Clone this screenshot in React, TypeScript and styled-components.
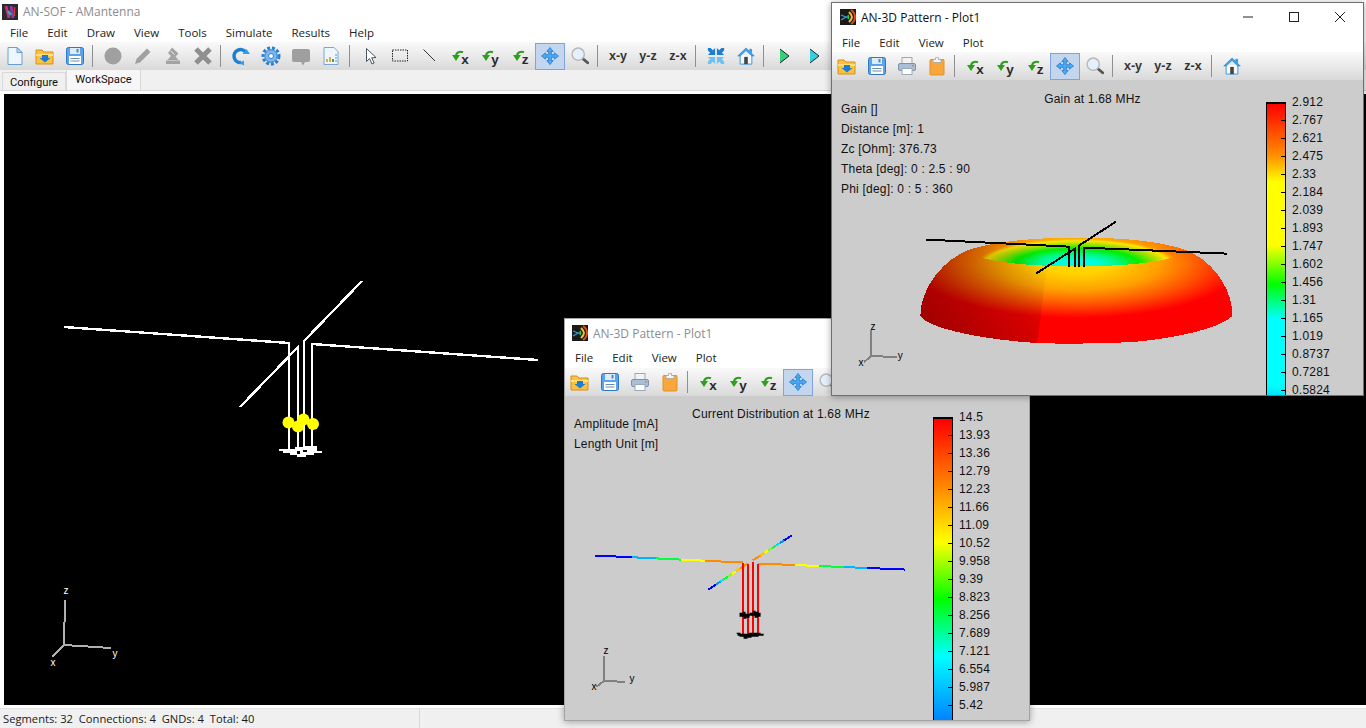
import React from 'react';
import styled, { createGlobalStyle } from 'styled-components';

const UI_FONT = '"Open Sans", "Noto Sans", "Liberation Sans", sans-serif';
const PLOT_FONT = '"Liberation Sans", Arial, sans-serif';

const Global = createGlobalStyle`
  html, body { margin: 0; padding: 0; width: 1366px; height: 728px; overflow: hidden; background: #fff; }
  * { box-sizing: border-box; }
`;

const Desktop = styled.div`
  position: relative;
  width: 1366px;
  height: 728px;
  overflow: hidden;
  font-family: ${UI_FONT};
  font-size: 12px;
  color: #1a1a1a;
`;

const MainWindow = styled.div`
  display: flex;
  flex-direction: column;
  height: 728px;
  background: #fff;
`;

const TitleBar = styled.div<{ $h: number; $pad: number; $active?: boolean }>`
  display: flex;
  align-items: center;
  gap: 5px;
  height: ${p => p.$h}px;
  padding-left: ${p => p.$pad}px;
  background: #fff;
  color: ${p => (p.$active ? '#111' : '#8c8c8c')};
  font-size: 12px;
  flex: none;
`;

const TitleText = styled.span`
  flex: 1;
  white-space: nowrap;
`;

const MenuBar = styled.div<{ $h: number; $top?: number }>`
  display: flex;
  align-items: center;
  height: ${p => p.$h}px;
  padding: ${p => p.$top ?? 0}px 0 0 0.5px;
  background: #fff;
  flex: none;
`;

const MenuItem = styled.span`
  padding: 0 9.5px;
  font-size: 11.5px;
  white-space: nowrap;
  color: #222;
`;

const Toolbar = styled.div`
  display: flex;
  align-items: center;
  height: 28px;
  flex: none;
  background: linear-gradient(#f9f9f9, #f2f2f2 25%, #d9d9d9);
`;

const ToolButton = styled.div<{ $active?: boolean }>`
  display: flex;
  align-items: center;
  justify-content: center;
  flex: none;
  width: 30px;
  height: 27px;
  border: 1px solid ${p => (p.$active ? '#7ea3df' : 'transparent')};
  background: ${p => (p.$active ? '#c4d5ee' : 'transparent')};
`;

const Separator = styled.div<{ $left?: number; $right?: number }>`
  flex: none;
  width: 1px;
  height: 22px;
  background: #8f8f8f;
  margin: 0 ${p => p.$right ?? 5}px 0 ${p => p.$left ?? 2}px;
`;

const AxisLetter = styled.span`
  font: bold 13.5px/1 ${PLOT_FONT};
  color: #2a2a2a;
  margin: 8px 0 0 -3px;
`;

const PlaneLabel = styled.span`
  font: bold 12.5px/1 ${PLOT_FONT};
  color: #333;
  white-space: nowrap;
`;

const TabStrip = styled.div`
  display: flex;
  align-items: flex-end;
  height: 21px;
  padding-left: 2px;
  flex: none;
  background: #f0f0f0;
  border-bottom: 1px solid #d9d9d9;
`;

const Tab = styled.div<{ $active?: boolean }>`
  display: flex;
  align-items: center;
  justify-content: center;
  width: ${p => (p.$active ? 75 : 64)}px;
  height: ${p => (p.$active ? 21 : 18)}px;
  background: ${p => (p.$active ? '#f7f7f7' : '#f0f0f0')};
  border: 1px solid #d9d9d9;
  border-bottom: none;
  padding-top: ${p => (p.$active ? 0 : 1)}px;
  padding-bottom: ${p => (p.$active ? 1 : 0)}px;
  font-family: Roboto, ${UI_FONT};
  font-size: 11.2px;
  color: #111;
`;

const Canvas = styled.div`
  flex: 1;
  margin: 3px 0 3px 4px;
  background: #000;
  min-height: 0;
`;

const Drawing = styled.svg`
  display: block;
  width: 100%;
  height: 100%;
`;

const StatusBar = styled.div`
  display: flex;
  align-items: center;
  height: 20px;
  flex: none;
  background: #f0f0f0;
  border-top: 1px solid #e3e3e3;
`;

const StatusCell = styled.div`
  width: 420px;
  height: 100%;
  display: flex;
  align-items: center;
  padding-left: 3px;
  border-right: 1px solid #d9d9d9;
  font-size: 11.2px;
  white-space: pre;
`;

const PlotWindow = styled.div<{ $x: number; $y: number; $w: number; $h: number; $active?: boolean }>`
  position: absolute;
  left: ${p => p.$x}px;
  top: ${p => p.$y}px;
  width: ${p => p.$w}px;
  height: ${p => p.$h}px;
  display: flex;
  flex-direction: column;
  background: #fff;
  border: 1px solid ${p => (p.$active ? '#6f6f6f' : '#a3a3a3')};
  box-shadow: 0 1px 7px rgba(0, 0, 0, 0.35);
  overflow: hidden;
`;

const WindowControls = styled.div`
  display: flex;
  flex: none;
  width: 138px;
  height: 100%;
`;

const WindowControl = styled.div`
  display: flex;
  align-items: center;
  justify-content: center;
  flex: 1;
`;

const PlotBody = styled.div<{ $padTop: number; $padLeft: number }>`
  position: relative;
  display: flex;
  align-items: flex-start;
  flex: 1;
  min-height: 0;
  overflow: hidden;
  padding: ${p => p.$padTop}px 0 0 ${p => p.$padLeft}px;
  background: #ccc;
  color: #111;
  font: 12px ${PLOT_FONT};
  letter-spacing: 0.2px;
`;

const PlotLayer = styled.svg`
  position: absolute;
  inset: 0;
  width: 100%;
  height: 100%;
`;

const InfoList = styled.div<{ $top: number }>`
  position: relative;
  flex: none;
  width: 100px;
  margin-top: ${p => p.$top}px;
`;

const InfoLine = styled.div`
  height: 20px;
  line-height: 20px;
  white-space: nowrap;
`;

const PlotTitle = styled.div<{ $top: number; $gap: number; $w: number }>`
  position: relative;
  flex: none;
  width: ${p => p.$w}px;
  text-align: center;
  line-height: 14px;
  margin: ${p => p.$top}px ${p => p.$gap}px 0 0;
  white-space: nowrap;
`;

const ScaleBar = styled.div<{ $stops: string; $h: number }>`
  position: relative;
  flex: none;
  width: 20px;
  height: ${p => p.$h}px;
  border: 2px solid #000;
  border-width: 2px 1.5px 0;
  background: linear-gradient(${p => p.$stops});

  &::after {
    content: '';
    position: absolute;
    right: 0;
    top: 16px;
    width: 4px;
    height: 100%;
    background: repeating-linear-gradient(#000 0 1px, transparent 1px 18px);
  }
`;

const ScaleLabels = styled.div`
  position: relative;
  flex: none;
  margin: -9px 0 0 6px;
`;

const ScaleLabel = styled.div`
  height: 18px;
  line-height: 18px;
  white-space: nowrap;
`;

const AppIcon = styled.svg`
  flex: none;
`;

/* ---------- icons ---------- */

const Ico: React.FC<{ children: React.ReactNode; size?: number }> = ({ children, size = 20 }) => (
  <svg width={size} height={size} viewBox="0 0 20 20">{children}</svg>
);

const NewIcon = () => (
  <Ico>
    <path d="M3 1.500h9l5 5v12H3z" fill="#eef6fd" stroke="#6aa0cf" />
    <path d="M12 1.500v5h5z" fill="#bcd9f0" stroke="#6aa0cf" />
  </Ico>
);
const OpenIcon = () => (
  <Ico>
    <path d="M1 4h6l2 2h9v12H1z" fill="#fcc33a" stroke="#d98d1f" />
    <path d="M1 8h17v2H1z" fill="#ffe07a" />
    <path d="M7 9h6v3h2.500L10 16.500 4.500 12H7z" fill="#1c7cd8" />
  </Ico>
);
const SaveIcon = () => (
  <Ico>
    <rect x="1.500" y="1.500" width="17" height="17" rx="2" fill="#5aa5ea" stroke="#2f78c4" />
    <rect x="5" y="2" width="10" height="6" fill="#dcecfa" />
    <rect x="11.500" y="3" width="2" height="3.500" fill="#4b88c4" />
    <rect x="4" y="10" width="12" height="8" fill="#fff" />
    <path d="M5.500 12.500h9M5.500 15h9" stroke="#6a8cac" />
  </Ico>
);
const PrintIcon = () => (
  <Ico>
    <rect x="5" y="1.500" width="10" height="7" fill="#f3f3f3" stroke="#9aa9bb" />
    <rect x="1.500" y="7.500" width="17" height="7" rx="1.500" fill="#a9bfd8" stroke="#7b93b0" />
    <rect x="5" y="12.500" width="10" height="6" fill="#fff" stroke="#9aa9bb" />
    <rect x="15" y="9" width="2" height="1.500" fill="#e0883a" />
  </Ico>
);
const ClipIcon = () => (
  <Ico>
    <rect x="3" y="3.500" width="14" height="15.500" rx="1" fill="#f8a73d" stroke="#e58f22" />
    <path d="M6 3.500h2.500V1.500h3v2H14v3H6z" fill="#f5f5f5" stroke="#a5a5a5" strokeWidth="0.800" />
  </Ico>
);
const CircleIcon = () => <Ico><circle cx="10" cy="10" r="8.500" fill="#a0a0a0" /></Ico>;
const PencilIcon = () => (
  <Ico><path d="M2 18l1.500-5L14 2.500l3.500 3.500L7 16.500z" fill="#a0a0a0" /></Ico>
);
const StampIcon = () => (
  <Ico>
    <path d="M9 1.500l6.500 6-3 3 3 3.500H4.500l3.500-4-3-3z" fill="#a3a3a3" />
    <path d="M3 14.500h14V18H3z" fill="#a3a3a3" />
    <path d="M7.500 5l4 3.500" stroke="#eee" />
  </Ico>
);
const CrossIcon = () => (
  <Ico><path d="M3 3l14 14M17 3L3 17" stroke="#8f8f8f" strokeWidth="5" /></Ico>
);
const RefreshIcon = () => (
  <Ico>
    <path d="M15 6.500A6.500 6.500 0 1 0 10 16.500" fill="none" stroke="#1b7fd6" strokeWidth="3.500" />
    <path d="M11.500 8h7.500l-3.500-5zM8 17l5 2.500v-5z" fill="#28a1ee" />
  </Ico>
);
const GearIcon = () => (
  <Ico>
    <circle cx="10" cy="10" r="8" fill="none" stroke="#2d7fd0" strokeWidth="3" strokeDasharray="3 1.800" />
    <circle cx="10" cy="10" r="6.200" fill="#7cb8ef" stroke="#2d7fd0" />
    <circle cx="10" cy="10" r="2.500" fill="#fff" stroke="#2d7fd0" />
  </Ico>
);
const CommentIcon = () => (
  <Ico><path d="M3 3h14a2 2 0 0 1 2 2v9a2 2 0 0 1-2 2h-3l-2 3.500L10 16H3a2 2 0 0 1-2-2V5a2 2 0 0 1 2-2z" fill="#9f9f9f" /></Ico>
);
const ReportIcon = () => (
  <Ico>
    <path d="M3 1.500h10l4 4v13H3z" fill="#eef5fc" stroke="#7ba6cf" />
    <path d="M6 16v-3M9 16v-5" stroke="#e8a92f" strokeWidth="2" />
    <path d="M12 16v-3" stroke="#3aa655" strokeWidth="2" />
    <path d="M14 9h2M14 12h2M14 15h2" stroke="#5a94cf" />
  </Ico>
);
const ArrowIcon = () => (
  <Ico><path d="M6.500 2.500v13l3-3 2.500 5.500 2.200-1-2.500-5.200 4.300-.3z" fill="#fff" stroke="#4c5560" /></Ico>
);
const RectIcon = () => (
  <Ico><rect x="2.500" y="4" width="15" height="11" fill="none" stroke="#222" strokeDasharray="1.500 1" /></Ico>
);
const LineIcon = () => (
  <Ico><path d="M3.500 3.500L15 15" stroke="#333" /></Ico>
);
const RotateArrow = () => (
  <svg width="13" height="13" viewBox="0 0 13 13">
    <path d="M12 2.200C8.500 1 5.500 2.500 5 5.500" fill="none" stroke="#2f9e1f" strokeWidth="2.200" />
    <path d="M1 5h8L5 11z" fill="#2f9e1f" />
  </svg>
);
const PanIcon = () => (
  <Ico size={18}>
    <path d="M10 .5L13.500 5H11.500v3.500H15V6.500L19.500 10 15 13.500V11.500H11.500V15H13.500L10 19.500 6.500 15H8.500V11.500H5V13.500L.5 10 5 6.500V8.500H8.500V5H6.500z" fill="#49a9f2" stroke="#1f73c6" strokeWidth="0.800" />
  </Ico>
);
const ZoomIcon = () => (
  <Ico size={18}>
    <path d="M12.500 12.500l6 5" stroke="#555" strokeWidth="3.200" strokeLinecap="round" />
    <circle cx="8" cy="8" r="6.800" fill="#e4f0fb" stroke="#b9b9b9" strokeWidth="1.600" />
  </Ico>
);
const FitIcon = () => (
  <Ico size={18}>
    <path d="M1 1h3l2.500 2.500L9 1v8H1l2.500-2.500L1 4z" fill="#1c7fd2" />
    <path d="M19 1h-3l-2.500 2.500L11 1v8h8l-2.500-2.500L19 4z" fill="#1c7fd2" />
    <path d="M1 19h3l2.500-2.500L9 19v-8H1l2.500 2.500L1 16z" fill="#6cc2f2" />
    <path d="M19 19h-3l-2.500-2.500L11 19v-8h8l-2.500 2.500L19 16z" fill="#6cc2f2" />
  </Ico>
);
const HomeIcon = () => (
  <Ico size={18}>
    <path d="M3.500 9v10h13V9" fill="#f4f9fe" stroke="#2f8fdd" />
    <path d="M10 1L.8 10h2.700L10 4l6.500 6h2.700l-3-3V2.500h-2V5z" fill="#39a3ee" stroke="#1c78c8" strokeWidth="0.600" />
    <rect x="8" y="11" width="4" height="8" fill="#444" />
  </Ico>
);
const PlayIcon: React.FC<{ color: string }> = ({ color }) => (
  <Ico>
    <path d="M6 3l9 7-9 7z" fill={color} />
    <path d="M6 3l9 7-9 7" fill="none" stroke="#222" />
  </Ico>
);

const Rotate: React.FC<{ axis: string }> = ({ axis }) => (
  <ToolButton>
    <RotateArrow />
    <AxisLetter>{axis}</AxisLetter>
  </ToolButton>
);
const Plane: React.FC<{ label: string }> = ({ label }) => (
  <ToolButton><PlaneLabel>{label}</PlaneLabel></ToolButton>
);
const Tool: React.FC<{ children: React.ReactNode; active?: boolean }> = ({ children, active }) => (
  <ToolButton $active={active}>{children}</ToolButton>
);

const PlotAppIcon = () => (
  <AppIcon width="16" height="16" viewBox="0 0 16 16">
    <rect width="16" height="16" fill="#1a1a1a" />
    <path d="M1 6l5 2-5 3M5 8h3" stroke="#3b9ad6" strokeWidth="1.300" fill="none" />
    <path d="M11 1c3 2 4 5 4 7s-1 5-4 7" stroke="#e04a20" strokeWidth="2" fill="none" />
    <path d="M9 3c2 2 3 3 3 5s-1 3-3 5" stroke="#e8c52a" strokeWidth="2" fill="none" />
    <path d="M8 6c.7 1 .7 3 0 4" stroke="#3fc04a" strokeWidth="1.500" fill="none" />
  </AppIcon>
);
const MainAppIcon = () => (
  <AppIcon width="16" height="16" viewBox="0 0 16 16">
    <rect width="16" height="16" fill="#2a2a2a" />
    <path d="M4 2l3 12" stroke="#c2317e" strokeWidth="3" />
    <path d="M9 2l2 12" stroke="#8c35b8" strokeWidth="3" />
    <path d="M6 7l3 4" stroke="#2fb3a8" strokeWidth="2.500" />
    <path d="M12.500 3v9" stroke="#d33a2e" strokeWidth="1.500" />
  </AppIcon>
);

/* ---------- drawings ---------- */

const Axes: React.FC<{
  o: [number, number]; z: [number, number]; y: [number, number]; x: [number, number];
  lz: [number, number]; ly: [number, number]; lx: [number, number];
  stroke: string; text: string; size: number; width: number;
}> = ({ o, z, y, x, lz, ly, lx, stroke, text, size, width }) => (
  <g>
    <path d={`M${o} L${z} M${o} L${y} M${o} L${x}`} stroke={stroke} strokeWidth={width} fill="none" shapeRendering="crispEdges" />
    <g fill={text} fontSize={size} fontFamily={PLOT_FONT} textAnchor="middle">
      <text x={lz[0]} y={lz[1]}>z</text>
      <text x={ly[0]} y={ly[1]}>y</text>
      <text x={lx[0]} y={lx[1]}>x</text>
    </g>
  </g>
);

const MainAntenna = () => (
  <Drawing viewBox="4 94 1362 611" preserveAspectRatio="none">
    <g fill="none" stroke="#fff" strokeWidth="2.400" shapeRendering="crispEdges">
      <path d="M64 327L289 343V449" />
      <path d="M240 407L298 347V449" />
      <path d="M362 281L304 341V449" />
      <path d="M538 360L312 344V449" />
    </g>
    <g fill="#ffff00">
      <circle cx="288.500" cy="422.500" r="6" />
      <circle cx="298" cy="426.500" r="6" />
      <circle cx="303.500" cy="419.500" r="6" />
      <circle cx="313" cy="424" r="6" />
    </g>
    <path d="M279 449h16v-2h10v-1h12v5h5v2h-8v2h-8v2h-9v-2h-7v-2h-7v-2h-4z" fill="#fff" />
    <path d="M297 451h3v3h-3zM303 450h4v2h-4z" fill="#000" />
    <Axes o={[64, 645]} z={[65, 600]} y={[111, 648]} x={[52, 657]} lz={[66, 594]} ly={[115, 657]} lx={[53, 666]}
      stroke="#b0b0b0" text="#fff" size={10} width={2} />
  </Drawing>
);

const DOME = 'M921 315C921 290 940 262 967 250C995 240 1040 237 1077 237C1120 237 1160 240 1187 250C1215 262 1232 290 1232 315C1222 326 1180 337 1133 341C1100 343 1060 343 1037 342C1000 340 930 330 921 315Z';

const GainPlot = () => (
  <PlotLayer viewBox="833 80 529 314" preserveAspectRatio="xMinYMin slice">
    <defs>
      <radialGradient id="domeFill" gradientUnits="userSpaceOnUse" cx="0" cy="0" r="1" gradientTransform="translate(1077 262) scale(165 55)">
        <stop offset="0.2" stopColor="#ffd400" />
        <stop offset="0.5" stopColor="#ffa000" />
        <stop offset="0.75" stopColor="#ff5400" />
        <stop offset="1" stopColor="#ff0000" />
      </radialGradient>
      <radialGradient id="ringFill" gradientUnits="userSpaceOnUse" cx="0" cy="0" r="1" gradientTransform="translate(1077 264) scale(100 26)">
        <stop offset="0.2" stopColor="#00ffe0" />
        <stop offset="0.42" stopColor="#00f880" />
        <stop offset="0.62" stopColor="#00ee00" />
        <stop offset="0.8" stopColor="#a8e000" />
        <stop offset="0.92" stopColor="#ffe600" />
        <stop offset="1" stopColor="#ffd000" stopOpacity="0" />
      </radialGradient>
      <linearGradient id="shade" gradientUnits="userSpaceOnUse" x1="930" y1="320" x2="1040" y2="250">
        <stop offset="0" stopColor="#000" stopOpacity="0.36" />
        <stop offset="0.63" stopColor="#000" stopOpacity="0.16" />
        <stop offset="1" stopColor="#000" stopOpacity="0" />
      </linearGradient>
      <clipPath id="leftPart">
        <path d="M900 230H1047V266L1037 345H900z" />
      </clipPath>
    </defs>
    <g shapeRendering="crispEdges">
      <path d={DOME} fill="url(#domeFill)" />
      <path d="M970 253C1000 232 1154 232 1184 253C1150 270 1004 270 970 253Z" fill="url(#ringFill)" />
      <path d={DOME} fill="url(#shade)" clipPath="url(#leftPart)" />
      <g fill="none" stroke="#000" strokeWidth="2">
        <path d="M927 239L1069 246V266" />
        <path d="M1036 273L1075 248V266" />
        <path d="M1116 221L1079 245V266" />
        <path d="M1227 253L1084 247V266" />
      </g>
    </g>
    <Axes o={[872, 355]} z={[872, 329]} y={[898, 356]} x={[865, 361]} lz={[874, 329]} ly={[901, 358]} lx={[862, 365]}
      stroke="#808080" text="#000" size={10} width={2} />
  </PlotLayer>
);

type Seg = [number, string];
const BLUE = '#0000ff';
const SKY = '#00b4ff';
const GREEN = '#00ff40';
const YEL = '#ffff00';
const ORG = '#ff8c00';

const leftWire: Seg[] = [[628, BLUE], [632, BLUE], [650, SKY], [656, SKY], [671, GREEN], [681, GREEN], [705, YEL], [714, ORG], [742, ORG]];
const rightWire: Seg[] = [[779, ORG], [794, ORG], [818, YEL], [843, GREEN], [866, SKY], [904, BLUE]];
const diagColors = [BLUE, BLUE, '#0090ff', '#00e0e0', GREEN, '#80ff00', YEL, '#ffc000', ORG, ORG];

const horizontal = (x0: number, y0: number, x1: number, y1: number, segs: Seg[]) => {
  let prev = x0;
  return segs.map(([end, color]) => {
    const ya = y0 + ((prev - x0) / (x1 - x0)) * (y1 - y0);
    const yb = y0 + ((end - x0) / (x1 - x0)) * (y1 - y0);
    const line = <line key={end} x1={prev} y1={ya} x2={end} y2={yb} stroke={color} />;
    prev = end;
    return line;
  });
};
const diagonal = (x0: number, y0: number, x1: number, y1: number, colors: string[]) =>
  colors.map((color, i) => {
    const a = i / colors.length;
    const b = (i + 1) / colors.length;
    return (
      <line key={i} x1={x0 + (x1 - x0) * a} y1={y0 + (y1 - y0) * a} x2={x0 + (x1 - x0) * b} y2={y0 + (y1 - y0) * b} stroke={color} />
    );
  });

const CurrentPlot = () => (
  <PlotLayer viewBox="565 396 463 323" preserveAspectRatio="xMinYMin slice">
    <g strokeWidth="2" shapeRendering="crispEdges" fill="none">
      {horizontal(595, 555, 742, 562, leftWire)}
      {horizontal(757, 563, 904, 569, rightWire)}
      {diagonal(708, 589, 747, 563, diagColors)}
      {diagonal(791, 535, 752, 560, diagColors)}
      <path d="M742 562V634M747 563V634M752 561V634M757 563V634" stroke="#ff0000" />
    </g>
    <path d="M739 612h3v-1h3v2h4v-1h3v-2h3v1h3v1h2v4h-3v1h-3v-2h-5v2h-3v1h-3v-2h-4z" fill="#000" />
    <path d="M736 632h4v1h8v-1h12v1h3v2h-5v1h-7v1h-4v1h-4v-2h-4v-1h-2v-2h-1z" fill="#000" />
    <Axes o={[604, 680]} z={[604, 655]} y={[625, 681]} x={[596, 686]} lz={[606, 653]} ly={[632, 681]} lx={[594, 689]}
      stroke="#808080" text="#000" size={10} width={2} />
  </PlotLayer>
);

/* ---------- plot window ---------- */

const currentScale = ['14.5', '13.93', '13.36', '12.79', '12.23', '11.66', '11.09', '10.52', '9.958', '9.39', '8.823', '8.256', '7.689', '7.121', '6.554', '5.987', '5.42'];
const gainScale = ['2.912', '2.767', '2.621', '2.475', '2.33', '2.184', '2.039', '1.893', '1.747', '1.602', '1.456', '1.31', '1.165', '1.019', '0.8737', '0.7281', '0.5824'];

const currentStops = '#ff0000 0, #ff9000 72px, #ffff00 123px, #00ff00 180px, #00ffff 237px, #0080ff 303px';
const gainStops = '#ff0000 0, #ff8c00 51px, #ffff00 78px, #ffff00 141px, #00ff00 180px, #00ffff 215px, #00ffff 281px, #00e0ff 293px';

const PlotToolbar: React.FC<{ home?: boolean }> = ({ home }) => (
  <Toolbar>
    <Tool><OpenIcon /></Tool>
    <Tool><SaveIcon /></Tool>
    <Tool><PrintIcon /></Tool>
    <Tool><ClipIcon /></Tool>
    <Separator />
    <Rotate axis="x" />
    <Rotate axis="y" />
    <Rotate axis="z" />
    <Tool active><PanIcon /></Tool>
    <Tool><ZoomIcon /></Tool>
    <Separator />
    <Plane label="x-y" />
    <Plane label="y-z" />
    <Plane label="z-x" />
    <Separator $left={3} />
    {home && <Tool><HomeIcon /></Tool>}
  </Toolbar>
);

export default function App() {
  return (
    <Desktop>
      <Global />
      <MainWindow>
        <TitleBar $h={23} $pad={2}>
          <MainAppIcon />
          <TitleText>AN-SOF - AMantenna</TitleText>
        </TitleBar>
        <MenuBar $h={19}>
          {['File', 'Edit', 'Draw', 'View', 'Tools', 'Simulate', 'Results', 'Help'].map(m => (
            <MenuItem key={m}>{m}</MenuItem>
          ))}
        </MenuBar>
        <Toolbar>
          <Tool><NewIcon /></Tool>
          <Tool><OpenIcon /></Tool>
          <Tool><SaveIcon /></Tool>
          <Separator />
          <Tool><CircleIcon /></Tool>
          <Tool><PencilIcon /></Tool>
          <Tool><StampIcon /></Tool>
          <Tool><CrossIcon /></Tool>
          <Separator />
          <Tool><RefreshIcon /></Tool>
          <Tool><GearIcon /></Tool>
          <Tool><CommentIcon /></Tool>
          <Tool><ReportIcon /></Tool>
          <Separator $left={3} />
          <Tool><ArrowIcon /></Tool>
          <Tool><RectIcon /></Tool>
          <Tool><LineIcon /></Tool>
          <Rotate axis="x" />
          <Rotate axis="y" />
          <Rotate axis="z" />
          <Tool active><PanIcon /></Tool>
          <Tool><ZoomIcon /></Tool>
          <Separator />
          <Plane label="x-y" />
          <Plane label="y-z" />
          <Plane label="z-x" />
          <Separator />
          <Tool><FitIcon /></Tool>
          <Tool><HomeIcon /></Tool>
          <Separator />
          <Tool><PlayIcon color="#35d07a" /></Tool>
          <Tool><PlayIcon color="#35d0e0" /></Tool>
        </Toolbar>
        <TabStrip>
          <Tab>Configure</Tab>
          <Tab $active>WorkSpace</Tab>
        </TabStrip>
        <Canvas><MainAntenna /></Canvas>
        <StatusBar>
          <StatusCell>Segments: 32  Connections: 4  GNDs: 4  Total: 40</StatusCell>
        </StatusBar>
      </MainWindow>

      <PlotWindow $x={564} $y={318} $w={466} $h={403}>
        <TitleBar $h={28} $pad={7}>
          <PlotAppIcon />
          <TitleText>AN-3D Pattern - Plot1</TitleText>
        </TitleBar>
        <MenuBar $h={21}>
          {['File', 'Edit', 'View', 'Plot'].map(m => <MenuItem key={m}>{m}</MenuItem>)}
        </MenuBar>
        <PlotToolbar />
        <PlotBody $padTop={21} $padLeft={9}>
          <CurrentPlot />
          <InfoList $top={-3}>
            <InfoLine>Amplitude [mA]</InfoLine>
            <InfoLine>Length Unit [m]</InfoLine>
          </InfoList>
          <PlotTitle $top={-10} $gap={45} $w={214}>Current Distribution at 1.68 MHz</PlotTitle>
          <ScaleBar $stops={currentStops} $h={330} />
          <ScaleLabels>
            {currentScale.map(v => <ScaleLabel key={v}>{v}</ScaleLabel>)}
          </ScaleLabels>
        </PlotBody>
      </PlotWindow>

      <PlotWindow $x={831} $y={2} $w={533} $h={394} $active>
        <TitleBar $h={28} $pad={8} $active>
          <PlotAppIcon />
          <TitleText>AN-3D Pattern - Plot1</TitleText>
          <WindowControls>
            <WindowControl>
              <svg width="12" height="12" viewBox="0 0 12 12"><path d="M1 6h10" stroke="#222" /></svg>
            </WindowControl>
            <WindowControl>
              <svg width="12" height="12" viewBox="0 0 12 12"><rect x="1.500" y="1.500" width="9" height="9" fill="none" stroke="#222" /></svg>
            </WindowControl>
            <WindowControl>
              <svg width="12" height="12" viewBox="0 0 12 12"><path d="M1 1l10 10M11 1L1 11" stroke="#222" /></svg>
            </WindowControl>
          </WindowControls>
        </TitleBar>
        <MenuBar $h={21} $top={1}>
          {['File', 'Edit', 'View', 'Plot'].map(m => <MenuItem key={m}>{m}</MenuItem>)}
        </MenuBar>
        <PlotToolbar home />
        <PlotBody $padTop={22} $padLeft={9}>
          <GainPlot />
          <InfoList $top={-3}>
            <InfoLine>Gain []</InfoLine>
            <InfoLine>Distance [m]: 1</InfoLine>
            <InfoLine>Zc [Ohm]: 376.73</InfoLine>
            <InfoLine>Theta [deg]: 0 : 2.5 : 90</InfoLine>
            <InfoLine>Phi [deg]: 0 : 5 : 360</InfoLine>
          </InfoList>
          <PlotTitle $top={-10} $gap={22} $w={303}>Gain at 1.68 MHz</PlotTitle>
          <ScaleBar $stops={gainStops} $h={330} />
          <ScaleLabels>
            {gainScale.map(v => <ScaleLabel key={v}>{v}</ScaleLabel>)}
          </ScaleLabels>
        </PlotBody>
      </PlotWindow>
    </Desktop>
  );
}
